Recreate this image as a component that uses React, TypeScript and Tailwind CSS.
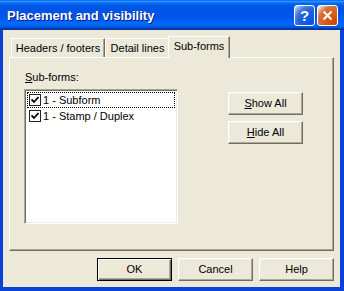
import React from "react";

const ui = "font-['Liberation_Sans',Arial,sans-serif] text-[11px] leading-[13px] text-black";

function Button({ children, isDefault }: { children: React.ReactNode; isDefault?: boolean }) {
  const edge = isDefault
    ? "border border-black shadow-[inset_1px_1px_#ffffff,inset_-1px_-1px_#716F64,inset_-2px_-2px_#ACA899]"
    : "border border-t-white border-l-white border-r-[#716F64] border-b-[#716F64] shadow-[inset_-1px_-1px_#ACA899,inset_1px_1px_#F1EFE2]";
  return (
    <button className={`w-[75px] h-[23px] bg-[#ECE9D8] flex items-center justify-center ${edge}`}>
      {children}
    </button>
  );
}

function Check() {
  return (
    <span className="w-[12px] h-[12px] border border-[#222] bg-white flex items-center justify-center shrink-0">
      <svg width="8" height="8" viewBox="0 0 8 8">
        <path d="M0.5 3.5 L3 6 L7.5 1" stroke="#000" strokeWidth="1.8" fill="none" />
      </svg>
    </span>
  );
}

function Tab({ label, width, active }: { label: string; width: number; active?: boolean }) {
  if (active) {
    return (
      <div
        className="relative z-10 -mb-px -ml-[2px] h-[22px] bg-[#ECE9D8] border-t border-l border-t-white border-l-white border-r border-r-[#716F64] shadow-[inset_-1px_0_#ACA899] flex items-start justify-center pt-[3px]"
        style={{ width }}
      >
        {label}
      </div>
    );
  }
  return (
    <div
      className="h-[19px] bg-[#ECE9D8] border-t border-l border-t-white border-l-white border-r border-r-[#716F64] shadow-[inset_-1px_0_#ACA899] flex items-start justify-center pt-[3px]"
      style={{ width }}
    >
      {label}
    </div>
  );
}

export default function App() {
  return (
    <div className={`w-[344px] h-[291px] flex flex-col bg-[#0842D8] ${ui}`}>
      {/* title bar */}
      <div className="h-[30px] shrink-0 flex items-center justify-between pl-[7px] pr-[6px] bg-[linear-gradient(to_bottom,#0058EE_0%,#3593FF_4%,#288EFF_6%,#127DFF_8%,#036FFC_10%,#0262EE_14%,#0057E5_20%,#0054E3_24%,#0055EB_56%,#005BF5_66%,#026AFE_76%,#0062EF_86%,#0052D6_92%,#0040AB_94%,#003092_100%)]">
        <span className="font-['Liberation_Sans',Arial,sans-serif] font-bold text-[13px] text-white pt-[1px] [text-shadow:1px_1px_#0A1883]">
          Placement and visibility
        </span>
        <div className="flex gap-[2px] pt-[1px]">
          <div className="w-[21px] h-[21px] rounded-[3px] border border-white bg-[radial-gradient(circle_at_90%_90%,#0054E9_0%,#2263D5_55%,#4479E4_70%,#A3BBEC_90%,#FFFFFF_100%)] flex items-center justify-center text-white font-bold text-[15px] leading-none">
            ?
          </div>
          <div className="w-[21px] h-[21px] rounded-[3px] border border-white bg-[radial-gradient(circle_at_90%_90%,#CC4600_0%,#DC6527_55%,#CD7546_70%,#FFCCB2_90%,#FFFFFF_100%)] flex items-center justify-center">
            <svg width="11" height="11" viewBox="0 0 11 11">
              <path d="M1.5 1.5 L9.5 9.5 M9.5 1.5 L1.5 9.5" stroke="#fff" strokeWidth="2" />
            </svg>
          </div>
        </div>
      </div>

      {/* client */}
      <div className="mx-[3px] mr-[4px] mb-[4px] flex-1 bg-[#ECE9D8] flex flex-col pt-[6px] px-[6px]">
        <div className="flex items-end h-[21px] pl-[2px]">
          <Tab label="Headers / footers" width={94} />
          <Tab label="Detail lines" width={65} />
          <Tab label="Sub-forms" width={62} active />
        </div>
        <div className="h-[194px] border border-t-white border-l-white border-r-[#716F64] border-b-[#716F64] shadow-[inset_-1px_-1px_#ACA899] pt-[13px] pl-[14px]">
          <div className="ml-[1px]">
            <u>S</u>ub-forms:
          </div>
          <div className="flex mt-[5px]">
            <div className="w-[154px] h-[135px] bg-white border border-t-[#ACA899] border-l-[#ACA899] border-r-white border-b-white shadow-[inset_1px_1px_#716F64,inset_-1px_-1px_#F1EFE2] p-[2px] pt-[2px]">
              <div className="h-[16px] flex items-center gap-[2px] pl-[1px] border border-dotted border-black">
                <Check />
                <span>1 - Subform</span>
              </div>
              <div className="h-[16px] flex items-center gap-[2px] pl-[2px]">
                <Check />
                <span>1 - Stamp / Duplex</span>
              </div>
            </div>
            <div className="ml-[50px] mt-[3px] flex flex-col gap-[6px]">
              <Button>
                <span>
                  <u>S</u>how All
                </span>
              </Button>
              <Button>
                <span>
                  <u>H</u>ide All
                </span>
              </Button>
            </div>
          </div>
        </div>
        <div className="flex justify-end gap-[6px] mt-[7px]">
          <Button isDefault>OK</Button>
          <Button>Cancel</Button>
          <Button>Help</Button>
        </div>
      </div>
    </div>
  );
}
